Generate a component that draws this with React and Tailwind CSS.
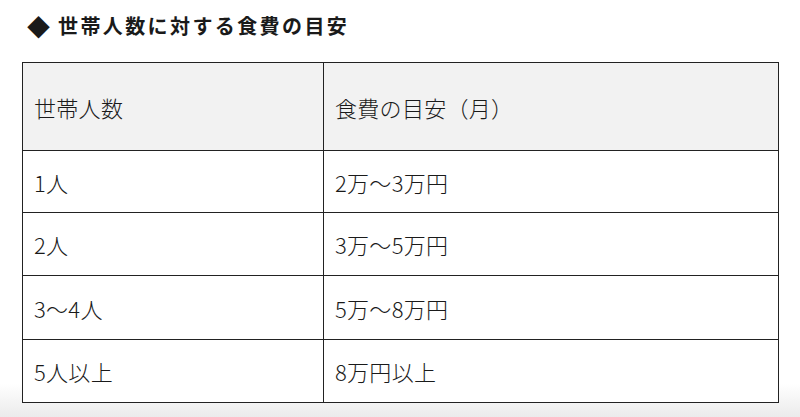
export default function App() {
  const rows = [
    ['1人', '2万〜3万円', 'h-[62px]'],
    ['2人', '3万〜5万円', 'h-[63px]'],
    ['3〜4人', '5万〜8万円', 'h-[64px]'],
    ['5人以上', '8万円以上', 'h-[63px]'],
  ];

  return (
    <div className="w-[800px] h-[417px] overflow-hidden bg-gradient-to-b from-white from-[92%] to-[#ebebeb] font-['Noto_Sans_CJK_JP','Noto_Sans',sans-serif] text-[#1a1a1a]">
      {/* Title */}
      <div className="flex items-center h-[54px] pl-[27px] pb-[2px]">
        <span className="text-[23px] leading-none mr-[8px]">◆</span>
        <h2 className="text-[20px] font-bold tracking-[2.4px] leading-none">世帯人数に対する食費の目安</h2>
      </div>

      {/* Table */}
      <table className="ml-[22px] mt-[8px] w-[757px] border-collapse text-[22px] font-light tracking-[0.3px] leading-none">
        <thead>
          <tr className="h-[88px] bg-[#f2f2f2]">
            <th className="w-[301px] border border-[#222] pl-[11px] text-left font-light">世帯人数</th>
            <th className="border border-[#222] pl-[11px] text-left font-light">食費の目安（月）</th>
          </tr>
        </thead>
        <tbody>
          {rows.map(([people, cost, h]) => (
            <tr key={people} className={`${h} bg-white`}>
              <td className="border border-[#222] pl-[11px]">{people}</td>
              <td className="border border-[#222] pl-[11px]">{cost}</td>
            </tr>
          ))}
        </tbody>
      </table>
    </div>
  );
}
